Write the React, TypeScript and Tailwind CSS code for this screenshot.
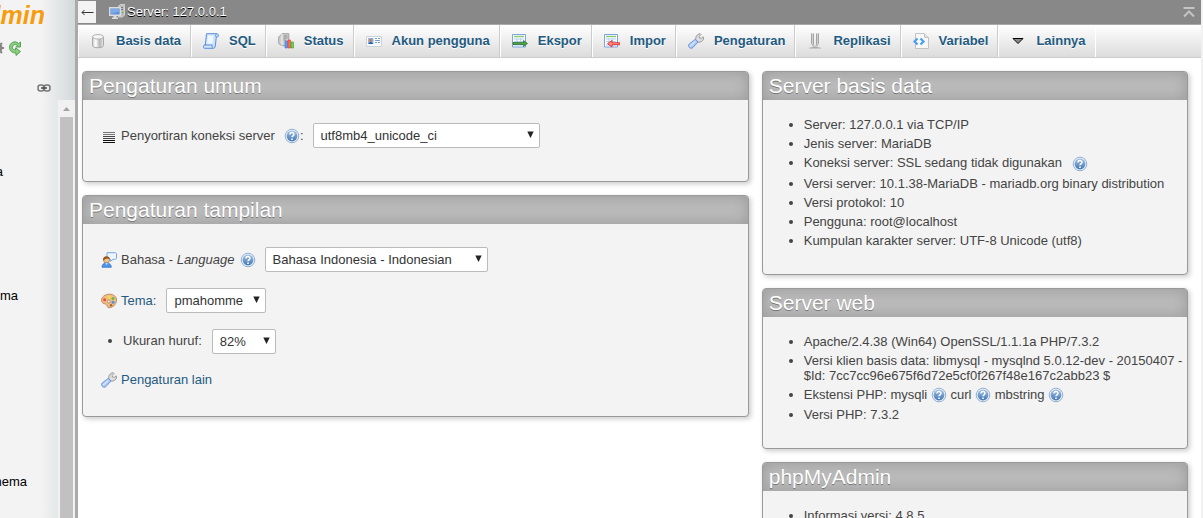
import type { ReactNode } from 'react';

function DatabaseIcon() {
  return (
    <svg width="16" height="16" viewBox="0 0 16 16" aria-hidden="true">
      <defs>
        <linearGradient id="db" x1="0" x2="1">
          <stop offset="0" stopColor="#cfcfcf" />
          <stop offset=".3" stopColor="#fff" />
          <stop offset=".65" stopColor="#b5b5b5" />
          <stop offset="1" stopColor="#e8e8e8" />
        </linearGradient>
      </defs>
      <path d="M2.5 4v8.5c0 3 11 3 11 0V4z" fill="url(#db)" stroke="#aaa" />
      <ellipse cx="8" cy="3.8" rx="5.5" ry="2.3" fill="#f4f4f4" stroke="#b4b4b4" />
    </svg>
  );
}

function SqlIcon() {
  return (
    <svg width="16" height="16" viewBox="0 0 16 16" aria-hidden="true">
      <path d="M3.500.7H14c1.600 0 1.800 3.300.5 3.300h-1.200l-1 9c-.2 1.600-.9 2.300-2 2.300H1.500c-1.400 0-1.400-3.300 0-3.300h.8z" fill="#cfe3fb" stroke="#5b8fdc" />
      <path d="M5 2.500h5.500L9.300 10.500H4z" fill="#eff7ff" />
      <path d="M13.300 4c-1-.6-1-2.500.3-3.200M1.500 12h7.800c-.5 1-.3 2.500.8 3.200" fill="none" stroke="#5b8fdc" />
    </svg>
  );
}

function StatusIcon() {
  return (
    <svg width="16" height="16" viewBox="0 0 16 16" aria-hidden="true">
      <path d="M.7 4 4 .7h6.800v12H4L.7 10.500z" fill="#cfcfcf" stroke="#a0a0a0" />
      <path d="M4 1v11.500" stroke="#f2f2f2" />
      <path d="M5.500 3h4M5.500 5h4M5.500 7h2" stroke="#8a8a8a" />
      <path d="M7 8h2.500v7H7z" fill="#5c9cf5" stroke="#3d78d8" strokeWidth=".6" />
      <path d="M10 7h2.500v8H10z" fill="#ff704b" stroke="#e33b1c" strokeWidth=".6" />
      <path d="M13 9h2.500v6H13z" fill="#6bd05c" stroke="#34a32d" strokeWidth=".6" />
    </svg>
  );
}

function AccountIcon() {
  return (
    <svg width="16" height="16" viewBox="0 0 16 16" aria-hidden="true">
      <path d="M.5 3.500h15v10H.5z" fill="#f7f9fb" stroke="#cdd2d8" />
      <path d="M2 5h5.500v6H2z" fill="#8bbcf0" />
      <circle cx="4.700" cy="7.200" r="1.700" fill="#c98250" />
      <path d="M2.500 11c0-2.800 4.500-2.800 4.500 0z" fill="#2f5fa8" />
      <path d="M9 5.500h2M12 5.500h2M9 7.500h5M9 9.500h2M12 9.500h2" stroke="#7aa0cd" />
    </svg>
  );
}

function TableIcon({ kind }: { kind: 'export' | 'import' }) {
  return (
    <svg width="16" height="16" viewBox="0 0 16 16" aria-hidden="true">
      <path d="M.5 1.500h13v12.500H.5z" fill="#fff" stroke="#7ba5e0" />
      <path d="M2 3.500h10" stroke="#8acb72" strokeWidth="1.500" />
      <path d="M2 6h10M2 8.500h10M2 12h10M5 5.500v7M8.500 5.500v7" stroke="#b5cdf0" />
      {kind === 'export' ? (
        <path d="M1 9.500h10.500v-2L15.500 10.500l-4 3v-2H1z" fill="#4ba346" stroke="#226b22" strokeWidth=".7" />
      ) : (
        <path d="M15.500 9.700H8V7.500L3.500 10.700 8 14v-2.300h7.500z" fill="#ff8b85" stroke="#e02020" strokeWidth=".8" />
      )}
    </svg>
  );
}

function WrenchIcon() {
  return (
    <svg width="16" height="16" viewBox="0 0 16 16" className="shrink-0" aria-hidden="true">
      <path d="M8 7.500C7 4.500 8.800 1 12.200.7l.8.8-1.800 2 .3 1.500 1.700.4 2-1.600.5 1c-.2 3.200-3.200 4.800-5.700 4.200z" fill="#dedede" stroke="#8e8e8e" strokeWidth=".9" />
      <path d="M7.300 6.300 10 9l-5 5.500c-2.500 2.200-5.800-1-3.800-3.500z" fill="#a9c8f5" stroke="#648ed2" strokeWidth=".9" />
      <path d="m7.200 8.200-5.200 5" stroke="#d4e5ff" strokeWidth="1.500" />
    </svg>
  );
}

function ReplicationIcon() {
  return (
    <svg width="16" height="16" viewBox="0 0 16 16" aria-hidden="true">
      <path d="M4 .5h2.500v10L8 13l1.500-2.500V.5H12v10L9.500 14h-3L4 10.500z" fill="#d0d0d0" />
      <path d="M4.500.500v10L7 13.500M9.500.500v11M6.500.500v11M11.500.500v10L9 13.500" fill="none" stroke="#a5a5a5" />
      <path d="M2 15.500c0-2 12-2 12 0z" fill="#aaa" />
    </svg>
  );
}

function VariableIcon() {
  return (
    <svg width="16" height="16" viewBox="0 0 16 16" aria-hidden="true">
      <path d="M2.500.5h9l4 4v11h-13z" fill="#f8f8f8" stroke="#c3c3c3" />
      <path d="M11.500.5v4h4" fill="#e3e3e3" stroke="#c3c3c3" />
      <path d="M4.500 5.500 1.500 8.500l3 3M7.500 5.500l3 3-3 3" fill="none" stroke="#4c9df0" strokeWidth="2.200" />
    </svg>
  );
}

function MoreIcon() {
  return (
    <svg width="16" height="16" viewBox="0 0 16 16" aria-hidden="true">
      <path d="M3 5.500h10l-5 5z" fill="#8a8a8a" stroke="#000" />
    </svg>
  );
}

function HelpIcon() {
  return (
    <svg width="16" height="16" viewBox="0 0 16 16" className="inline-block align-middle shrink-0" role="img" aria-label="Dokumentasi">
      <defs>
        <linearGradient id="help" x2="0" y2="1">
          <stop offset="0" stopColor="#a3c1e3" />
          <stop offset="1" stopColor="#4377b5" />
        </linearGradient>
      </defs>
      <circle cx="8" cy="8" r="6.800" fill="#e9f1fa" stroke="#7c9fc8" strokeWidth=".8" />
      <circle cx="8" cy="8" r="5.400" fill="url(#help)" />
      <path d="M6 6.600c0-2.700 4-2.600 4-.3 0 1.500-2 1.500-2 3" fill="none" stroke="#fff" strokeWidth="1.500" />
      <path d="M8 10.500v1.500" stroke="#fff" strokeWidth="1.600" />
    </svg>
  );
}

function ServerIcon() {
  return (
    <svg width="16" height="16" viewBox="0 0 16 16" aria-hidden="true">
      <path d="m9.500 2 2-1.500h4V11l-2 2h-4z" fill="#bdbdbd" stroke="#dedede" strokeWidth=".8" />
      <path d="M11 3.500h3M11 5.500h3" stroke="#777" />
      <path d="M13 8.500h1.500" stroke="#55c24c" strokeWidth="1.500" />
      <path d="M.7 3.700h10.600v7.600H.7z" fill="#5f8fd8" stroke="#dcdcdc" strokeWidth="1.400" />
      <path d="M2 5h8v2.500L2 10z" fill="#7eaae8" />
      <path d="M4.500 12h3v1.500H9V15H3v-1.500h1.500z" fill="#dcdcdc" />
    </svg>
  );
}

function CollationIcon() {
  return (
    <svg width="16" height="16" viewBox="0 0 16 16" className="shrink-0" aria-hidden="true">
      <path d="M2 4.500h12M2 6.500h12" stroke="#777" />
      <path d="M2 8.500h12M2 10.500h12" stroke="#444" />
      <path d="M2 12.500h12M2 14.500h12" stroke="#111" />
    </svg>
  );
}

function LanguageIcon() {
  return (
    <svg width="16" height="16" viewBox="0 0 16 16" className="shrink-0" aria-hidden="true">
      <path d="M6 .7h8.500l1 1v4.600l-1 1H12l-2.500 2V7.300H6z" fill="#edf5ff" stroke="#78a7df" />
      <circle cx="5.500" cy="8" r="3" fill="#f3c28b" stroke="#9c6331" strokeWidth=".6" />
      <path d="M2 8.500C1.500 3.500 8 3 9 7L5.500 6.500z" fill="#8f5623" />
      <path d="M1 15.300c-.5-5.900 9.500-5.900 9.300 0z" fill="#4d95ec" stroke="#2c6dc5" strokeWidth=".7" />
      <path d="m4.300 11.300 1.300 1.500L7 11.300z" fill="#fff" />
    </svg>
  );
}

function PaletteIcon() {
  return (
    <svg width="16" height="16" viewBox="0 0 16 16" className="shrink-0" aria-hidden="true">
      <path d="M8.500 1.200c4.300 0 7.200 2.500 7 6-.2 4.500-3.700 7.500-7.500 7.500-2.300 0-1.300-2.500-3.300-3.500C3 10.400.5 10.300.5 7.500c0-3.700 3.500-6.300 8-6.300z" fill="#efbd88" stroke="#b97a45" strokeWidth=".8" />
      <circle cx="3.600" cy="6.800" r="1.500" fill="#e94c41" />
      <circle cx="8" cy="4.200" r="1.600" fill="#f8dc3d" />
      <circle cx="12" cy="5.500" r="1.500" fill="#68b84e" />
      <circle cx="12" cy="9.200" r="1.500" fill="#4c8ddd" />
      <circle cx="7.800" cy="8.500" r="1.500" fill="#f3f3f3" stroke="#b97a45" strokeWidth=".8" />
      <circle cx="10" cy="12.200" r="1.200" fill="#9c663d" />
    </svg>
  );
}

const tabs: { label: string; icon: ReactNode }[] = [
  { label: 'Basis data', icon: <DatabaseIcon /> },
  { label: 'SQL', icon: <SqlIcon /> },
  { label: 'Status', icon: <StatusIcon /> },
  { label: 'Akun pengguna', icon: <AccountIcon /> },
  { label: 'Ekspor', icon: <TableIcon kind="export" /> },
  { label: 'Impor', icon: <TableIcon kind="import" /> },
  { label: 'Pengaturan', icon: <WrenchIcon /> },
  { label: 'Replikasi', icon: <ReplicationIcon /> },
  { label: 'Variabel', icon: <VariableIcon /> },
  { label: 'Lainnya', icon: <MoreIcon /> },
];

function Card({ title, className, children }: { title: string; className: string; children: ReactNode }) {
  return (
    <section className="overflow-hidden rounded border border-[#999] bg-[#f3f3f3] shadow-[2px_2px_5px_#ccc]">
      <h2 className="bg-[#bbb] px-[6px] text-[21px] leading-7 text-white shadow-[inset_0_0_15px_#999] [text-shadow:0_1px_0_#777]">
        {title}
      </h2>
      <div className={className}>{children}</div>
    </section>
  );
}

function Select({ id, value, className }: { id: string; value: string; className: string }) {
  return (
    <span className={`relative inline-flex ${className}`}>
      <select id={id} className="h-[25px] w-full appearance-none rounded-xs border border-[#bbb] bg-white px-[7px] text-[13px] text-[#333]">
        <option>{value}</option>
      </select>
      <svg width="7" height="7" viewBox="0 0 7 7" className="pointer-events-none absolute right-[6px] top-[8px]" aria-hidden="true">
        <path d="M.3.500h6.400L3.500 7z" fill="#222" />
      </svg>
    </span>
  );
}

function Sidebar() {
  return (
    <aside className="flex w-[78px] shrink-0 flex-col overflow-hidden border-r-3 border-[#aaa] bg-[#f3f3f3]">
      <div className="h-[100px] bg-linear-to-r from-[#f3f3f3] from-55% to-[#d3d9db]">
        <div className="flex h-8 w-[45px] items-center justify-end text-[25px] font-bold italic text-[#f89c0e]">dmin</div>
        <div className="flex h-8 w-[22px] items-center justify-end gap-[3px]">
          <svg width="16" height="16" viewBox="0 0 16 16" className="shrink-0" aria-hidden="true">
            <circle cx="8" cy="8" r="4" fill="none" stroke="#888" strokeWidth="3" />
            <path d="M8 1v3M8 12v3M1 8h3M12 8h3M3 3l2 2M11 11l2 2M13 3l-2 2M5 11l-2 2" stroke="#888" strokeWidth="2" />
          </svg>
          <svg width="14" height="16" viewBox="0 0 14 16" className="shrink-0" aria-hidden="true">
            <path d="M12.500 2v5H8l1.500-1.700C7 3.500 4 5.500 4.500 8c.3 1.500 1.500 2 3 2V7.800L12.500 11.500l-4.500 4V13C4 13 1.500 10.700 1.500 7.500c0-5 5.500-7.500 9.200-4z" fill="#8ccf80" stroke="#4a9a48" strokeWidth=".9" />
          </svg>
        </div>
        <div className="flex h-12 items-center justify-end pr-6">
          <svg width="14" height="8" viewBox="0 0 14 8" aria-hidden="true">
            <rect x="1" y="1" width="6" height="6" rx="2.500" fill="none" stroke="#777" strokeWidth="1.500" />
            <rect x="7" y="1" width="6" height="6" rx="2.500" fill="none" stroke="#777" strokeWidth="1.500" />
            <path d="M4 4h6" stroke="#444" strokeWidth="1.500" />
          </svg>
        </div>
      </div>
      <div className="flex flex-1">
        <ul className="flex-1 bg-linear-to-r from-[#f3f3f3] from-70% to-[#e4e8e8] pt-16 text-[13px] leading-4 text-black">
          <li className="flex w-[3px] justify-end">a</li>
          <li className="flex w-[18px] justify-end pt-[108px]">ma</li>
          <li className="flex w-[27px] justify-end pt-[170px]">hema</li>
        </ul>
        <div className="flex w-[17px] flex-col items-center bg-[#f1f1f1]">
          <svg width="17" height="17" viewBox="0 0 17 17" aria-hidden="true">
            <path d="M5 11h7L8.500 7z" fill="#a3a3a3" />
          </svg>
          <div className="w-[13px] flex-1 bg-[#c1c1c1]" />
        </div>
      </div>
    </aside>
  );
}

export default function App() {
  return (
    <div className="flex h-screen overflow-hidden bg-white font-['Liberation_Sans',Arial,sans-serif] text-[13px] text-[#444]">
      <Sidebar />
      <main className="flex min-w-0 flex-1 flex-col border-r-2 border-[#f1f1f1]">
        <header className="flex h-6 shrink-0 items-center bg-[#888] text-white">
          <button type="button" aria-label="Kembali" className="flex h-[22px] w-[18px] items-center justify-center bg-[#f3f3f3]">
            <svg width="14" height="9" viewBox="0 0 14 9" aria-hidden="true">
              <path d="M13.500 4.500H2M4.500 2 2 4.500 4.500 7" fill="none" stroke="#333" />
            </svg>
          </button>
          <a href="#server" className="ml-[13px] flex items-center gap-[2px] [text-shadow:0_1px_0_#000]">
            <ServerIcon />
            Server: 127.0.0.1
          </a>
          <button type="button" aria-label="Ke atas" className="ml-auto mr-[6px]">
            <svg width="12" height="12" viewBox="0 0 12 12" aria-hidden="true">
              <path d="M.5 2h11M1 10.500l5-5 5 5" fill="none" stroke="#c4c4c4" strokeWidth="2" />
            </svg>
          </button>
        </header>

        <nav className="flex h-[34px] shrink-0 border-y border-t-[#aaa] border-b-[#ccc] bg-linear-to-b from-white to-[#dcdcdc]">
          {tabs.map((tab) => (
            <a
              key={tab.label}
              href="#"
              className="flex items-center gap-[10px] whitespace-nowrap border-l border-r border-l-white border-r-[#ccc] pl-[11px] pr-[9px] font-bold text-[#235a81] [text-shadow:0_1px_0_#fff] last:border-r-white"
            >
              {tab.icon}
              {tab.label}
            </a>
          ))}
        </nav>

        <div className="grid grid-cols-[61fr_39fr] items-start gap-[13px] pb-4 pl-1 pr-[13px] pt-[13px]">
          <div className="flex flex-col gap-[13px]">
            <Card title="Pengaturan umum" className="px-[18px] pb-[33px] pt-[23px]">
              <div className="flex items-center gap-1">
                <CollationIcon />
                <label htmlFor="collation">Penyortiran koneksi server</label>
                <span className="ml-[5px] flex items-center">
                  <HelpIcon />:
                </span>
                <Select id="collation" value="utf8mb4_unicode_ci" className="ml-[5px] w-[227px]" />
              </div>
            </Card>

            <Card title="Pengaturan tampilan" className="flex flex-col gap-4 px-[18px] pb-[26px] pt-[23px]">
              <div className="flex items-center gap-1">
                <LanguageIcon />
                <label htmlFor="language">
                  Bahasa - <i>Language</i>
                </label>
                <span className="ml-px flex">
                  <HelpIcon />
                </span>
                <Select id="language" value="Bahasa Indonesia - Indonesian" className="ml-[5px] w-[223px]" />
              </div>
              <div className="flex items-center gap-1">
                <PaletteIcon />
                <label htmlFor="theme">
                  <a href="#themes" className="text-[#235a81]">Tema</a>:
                </label>
                <Select id="theme" value="pmahomme" className="ml-[6px] w-[100px]" />
              </div>
              <ul className="list-disc pl-[22px]">
                <li>
                  <label htmlFor="fontsize">Ukuran huruf:</label>
                  <Select id="fontsize" value="82%" className="ml-[10px] w-16 align-middle" />
                </li>
              </ul>
              <a href="#prefs" className="flex items-center gap-1 text-[#235a81]">
                <WrenchIcon />
                Pengaturan lain
              </a>
            </Card>
          </div>

          <div className="flex flex-col gap-[13px]">
            <Card title="Server basis data" className="pb-[26px] pt-[17px]">
              <ul className="flex list-disc flex-col gap-1 pl-[41px] leading-[15px]">
                <li>Server: 127.0.0.1 via TCP/IP</li>
                <li>Jenis server: MariaDB</li>
                <li>
                  Koneksi server: SSL sedang tidak digunakan <span className="ml-[6px]"><HelpIcon /></span>
                </li>
                <li>Versi server: 10.1.38-MariaDB - mariadb.org binary distribution</li>
                <li>Versi protokol: 10</li>
                <li>Pengguna: root@localhost</li>
                <li>Kumpulan karakter server: UTF-8 Unicode (utf8)</li>
              </ul>
            </Card>

            <Card title="Server web" className="pb-[26px] pt-[17px]">
              <ul className="flex list-disc flex-col gap-1 pl-[41px] leading-[15px]">
                <li>Apache/2.4.38 (Win64) OpenSSL/1.1.1a PHP/7.3.2</li>
                <li>Versi klien basis data: libmysql - mysqlnd 5.0.12-dev - 20150407 - $Id: 7cc7cc96e675f6d72e5cf0f267f48e167c2abb23 $</li>
                <li>
                  Ekstensi PHP: mysqli <HelpIcon /> curl <HelpIcon /> mbstring <HelpIcon />
                </li>
                <li>Versi PHP: 7.3.2</li>
              </ul>
            </Card>

            <Card title="phpMyAdmin" className="pb-[26px] pt-[17px]">
              <ul className="list-disc pl-[41px] leading-[15px]">
                <li>Informasi versi: 4.8.5</li>
              </ul>
            </Card>
          </div>
        </div>
      </main>
    </div>
  );
}
